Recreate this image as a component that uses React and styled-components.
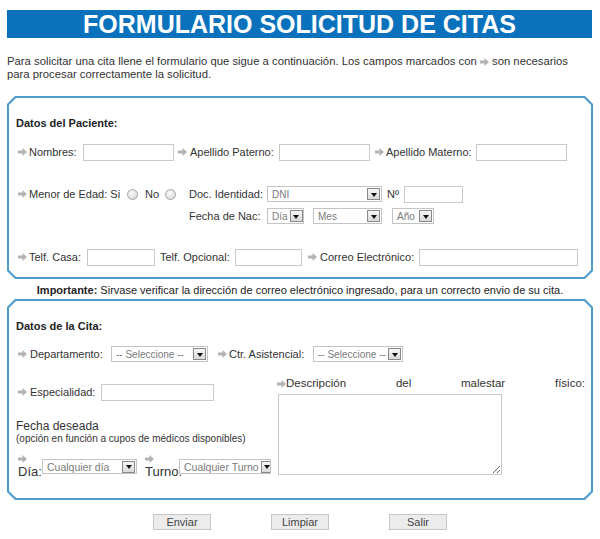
import React from "react";
import styled, { createGlobalStyle } from "styled-components";

const GlobalStyle = createGlobalStyle`
  body {
    margin: 0;
    background: #fff;
    font-family: "Liberation Sans", Arial, sans-serif;
    font-size: 11px;
    color: #333;
  }
`;

const chamfer = (n) =>
  `polygon(${n}px 0, calc(100% - ${n}px) 0, 100% ${n}px, 100% calc(100% - ${n}px), calc(100% - ${n}px) 100%, ${n}px 100%, 0 calc(100% - ${n}px), 0 ${n}px)`;

const Page = styled.div`
  width: 600px;
  padding-top: 10px;
`;

const TitleBar = styled.h1`
  margin: 0 8px 0 7px;
  height: 28px;
  line-height: 29px;
  background: #0a72bd;
  color: #fff;
  font-size: 25px;
  font-weight: bold;
  text-align: center;
`;

const Intro = styled.p`
  margin: 17px 0 0 7px;
  line-height: 13px;
  font-size: 11.3px;
`;

const Panel = styled.div`
  margin: ${(p) => p.$mt || 0}px 7px 0 7px;
  padding: 2px;
  background: #4e9ccd;
  clip-path: ${chamfer(8)};
`;

const PanelBody = styled.div`
  background: #fff;
  clip-path: ${chamfer(7)};
  padding: ${(p) => p.$pt}px 6px ${(p) => p.$pb}px 7px;
`;

const Heading = styled.div`
  font-weight: bold;
  color: #222;
  line-height: 13px;
`;

const Row = styled.div`
  display: flex;
  align-items: ${(p) => p.$align || "center"};
  margin-top: ${(p) => p.$mt || 0}px;
  min-height: 18px;
`;

const Label = styled.span`
  display: inline-block;
  flex: none;
  width: ${(p) => (p.$w ? `${p.$w}px` : "auto")};
  margin-left: ${(p) => p.$ml || 0}px;
  white-space: nowrap;
  line-height: 13px;
`;

const Input = styled.span`
  display: inline-block;
  flex: none;
  box-sizing: border-box;
  width: ${(p) => p.$w}px;
  height: 17px;
  margin-left: ${(p) => p.$ml || 0}px;
  border: 1px solid #c9c9c9;
  background: #fff;
`;

const SelectBox = styled.span`
  display: inline-flex;
  flex: none;
  align-items: center;
  justify-content: space-between;
  box-sizing: border-box;
  width: ${(p) => p.$w}px;
  height: ${(p) => p.$h || 16}px;
  margin-left: ${(p) => p.$ml || 0}px;
  margin-bottom: ${(p) => p.$mb || 0}px;
  padding-left: 4px;
  border: 1px solid #c4c4c4;
  background: #fff;
  color: #7a7a7a;
  font-size: ${(p) => p.$fs || 10}px;
  white-space: nowrap;
  overflow: hidden;
`;

const DropBtn = styled.span`
  flex: none;
  width: 13px;
  height: 12px;
  margin: 0 1px 0 2px;
  box-sizing: border-box;
  border: 1px solid #8a8a8a;
  background: linear-gradient(#f6f6f6, #d9d9d9);
  display: flex;
  align-items: center;
  justify-content: center;
  &::after {
    content: "";
    margin-top: 1px;
    border-left: 3.5px solid transparent;
    border-right: 3.5px solid transparent;
    border-top: 4px solid #111;
  }
`;

const Radio = styled.span`
  display: inline-block;
  flex: none;
  width: 11px;
  height: 11px;
  box-sizing: border-box;
  margin-left: ${(p) => p.$ml || 0}px;
  border-radius: 50%;
  border: 1px solid #a5a5a5;
  background: radial-gradient(circle at 40% 35%, #fafafa, #cfcfcf);
`;

const DocGrid = styled.div`
  display: grid;
  grid-template-columns: 78px auto;
  row-gap: 4px;
  margin-left: 13px;
  align-items: center;
  & > div {
    display: flex;
    align-items: center;
    height: 18px;
  }
`;

const Important = styled.p`
  margin: 5px 0 0 0;
  line-height: 13px;
  text-align: center;
  color: #222;
  b {
    font-weight: bold;
  }
`;

const Columns = styled.div`
  display: grid;
  grid-template-columns: 261px 308px;
  align-items: start;
  margin-top: 14px;
`;

const LeftCol = styled.div`
  padding-top: 6px;
`;

const Fecha = styled.div`
  margin-top: 19px;
  font-size: 12px;
  line-height: 13px;
`;

const Note = styled.div`
  font-size: 10px;
  line-height: 12px;
`;

const StackLabel = styled.span`
  display: inline-flex;
  flex-direction: column;
  flex: none;
  width: ${(p) => p.$w}px;
  margin-left: ${(p) => p.$ml || 0}px;
  font-size: 13px;
  line-height: 13px;
  svg {
    margin-bottom: 2px;
  }
`;

const DescLabel = styled.div`
  text-align: justify;
  text-align-last: justify;
  line-height: 13px;
  font-size: 11.5px;
`;

const TextArea = styled.textarea`
  display: block;
  box-sizing: border-box;
  width: 224px;
  height: 81px;
  margin: 4px 0 0 1px;
  border: 1px solid #c9c9c9;
  outline: none;
  background: #fff;
`;

const Buttons = styled.div`
  display: flex;
  justify-content: center;
  gap: 60px;
  margin-top: 14px;
`;

const Button = styled.button`
  width: 58px;
  height: 16px;
  padding: 0;
  border: 1px solid #c6c6c6;
  background: #ececec;
  color: #444;
  font-family: "Liberation Sans", Arial, sans-serif;
  font-size: 11px;
  line-height: 14px;
`;

const Arrow = ({ ml = 2 }) => (
  <svg
    width="9"
    height="8"
    viewBox="0 0 9 8"
    style={{ marginLeft: ml, flex: "none", verticalAlign: "middle" }}
  >
    <path d="M0 2.5h4.5V0L9 4 4.5 8V5.5H0z" fill="#b3b3b3" />
  </svg>
);

const Select = ({ w, h, ml, mb, fs, children }) => (
  <SelectBox $w={w} $h={h} $ml={ml} $mb={mb} $fs={fs}>
    <span>{children}</span>
    <DropBtn />
  </SelectBox>
);

export default function App() {
  return (
    <Page>
      <GlobalStyle />
      <TitleBar>FORMULARIO SOLICITUD DE CITAS</TitleBar>
      <Intro>
        Para solicitar una cita llene el formulario que sigue a continuación. Los campos marcados con{" "}
        <Arrow ml={0} /> son necesarios
        <br />
        para procesar correctamente la solicitud.
      </Intro>

      <Panel $mt={15}>
        <PanelBody $pt={19} $pb={11}>
          <Heading>Datos del Paciente:</Heading>
          <Row $mt={13}>
            <Arrow />
            <Label $ml={2} $w={54}>Nombres:</Label>
            <Input $w={91} />
            <Arrow ml={4} />
            <Label $ml={3} $w={89}>Apellido Paterno:</Label>
            <Input $w={91} />
            <Arrow ml={5} />
            <Label $ml={2} $w={90}>Apellido Materno:</Label>
            <Input $w={91} />
          </Row>
          <Row $mt={24} $align="flex-start">
            <Row>
              <Arrow />
              <Label $ml={2} $w={98}>Menor de Edad: Si</Label>
              <Radio />
              <Label $ml={7} $w={20}>No</Label>
              <Radio />
            </Row>
            <DocGrid>
              <Label>Doc. Identidad:</Label>
              <div>
                <Select w={115}>DNI</Select>
                <Label $ml={5} $w={17}>Nº</Label>
                <Input $w={59} />
              </div>
              <Label>Fecha de Nac:</Label>
              <div>
                <Select w={37}>Día</Select>
                <Select w={69} ml={9}>Mes</Select>
                <Select w={42} ml={10}>Año</Select>
              </div>
            </DocGrid>
          </Row>
          <Row $mt={23}>
            <Arrow />
            <Label $ml={2} $w={58}>Telf. Casa:</Label>
            <Input $w={68} />
            <Label $ml={5} $w={75}>Telf. Opcional:</Label>
            <Input $w={67} />
            <Arrow ml={6} />
            <Label $ml={3} $w={99}>Correo Electrónico:</Label>
            <Input $w={159} />
          </Row>
        </PanelBody>
      </Panel>

      <Important>
        <b>Importante:</b> Sirvase verificar la dirección de correo electrónico ingresado, para un correcto envio de su cita.
      </Important>

      <Panel $mt={2}>
        <PanelBody $pt={19} $pb={20}>
          <Heading>Datos de la Cita:</Heading>
          <Row $mt={12}>
            <Arrow />
            <Label $ml={3} $w={81}>Departamento:</Label>
            <Select w={97}>-- Seleccione --</Select>
            <Arrow ml={10} />
            <Label $ml={2} $w={84}>Ctr. Asistencial:</Label>
            <Select w={90}>-- Seleccione --</Select>
          </Row>
          <Columns>
            <LeftCol>
              <Row>
                <Arrow />
                <Label $ml={3} $w={71}>Especialidad:</Label>
                <Input $w={113} />
              </Row>
              <Fecha>Fecha deseada</Fecha>
              <Note>(opción en función a cupos de médicos disponibles)</Note>
              <Row $mt={10} $align="flex-end">
                <StackLabel $w={24} $ml={2}>
                  <Arrow ml={0} />
                  Día:
                </StackLabel>
                <Select w={95} h={15} mb={4} fs={10.5}>Cualquier día</Select>
                <StackLabel $w={34} $ml={8}>
                  <Arrow ml={0} />
                  Turno:
                </StackLabel>
                <Select w={92} h={15} mb={4} fs={10.5}>Cualquier Turno</Select>
              </Row>
            </LeftCol>
            <div>
              <DescLabel>
                <Arrow ml={0} />Descripción del malestar físico:
              </DescLabel>
              <TextArea />
            </div>
          </Columns>
        </PanelBody>
      </Panel>

      <Buttons>
        <Button>Enviar</Button>
        <Button>Limpiar</Button>
        <Button>Salir</Button>
      </Buttons>
    </Page>
  );
}
